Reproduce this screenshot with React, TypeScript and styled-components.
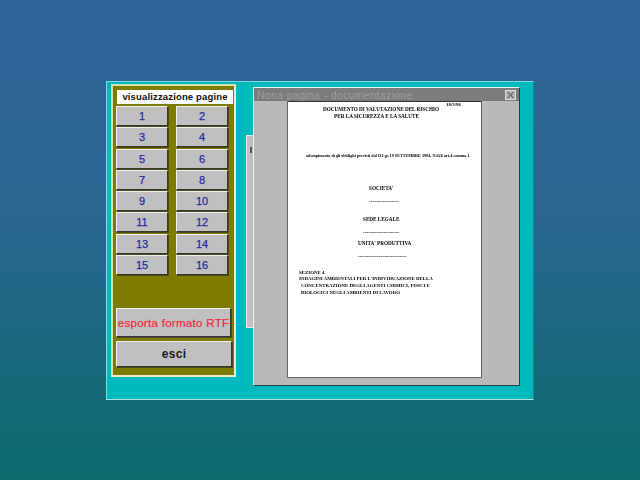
import React from "react";
import styled, { createGlobalStyle } from "styled-components";

const GlobalStyle = createGlobalStyle`
  html, body {
    margin: 0;
    padding: 0;
    width: 640px;
    height: 480px;
    overflow: hidden;
  }
  body {
    font-family: "Liberation Sans", Arial, sans-serif;
  }
`;

const Desktop = styled.div`
  position: relative;
  width: 640px;
  height: 480px;
  overflow: hidden;
  background: linear-gradient(180deg, #30639a 0%, #2a6690 45%, #0a6a6c 100%);
`;

// finestra principale
const MainWindow = styled.div`
  position: absolute;
  left: 106px;
  top: 81px;
  width: 428px;
  height: 319px;
  box-sizing: border-box;
  background: #00b9bd;
  border-top: 1px solid #7fdcdc;
  border-left: 1px solid #7fdcdc;
  border-right: 1px solid #0a8c90;
  border-bottom: 1px solid #b5e4e4;
`;

const SidePanel = styled.div`
  position: absolute;
  left: 4px;
  top: 2px;
  width: 125px;
  height: 293px;
  box-sizing: border-box;
  background: #7f7d00;
  border: 2px solid;
  border-color: #d8e0b0 #ecebc4 #ecebc4 #d8e0b0;
  padding: 4px 0 0 3px;
  display: flex;
  flex-direction: column;
`;

const PanelTitle = styled.div`
  height: 14px;
  width: 116px;
  margin-left: 1px;
  background: #fff;
  color: #111;
  font-size: 9.5px;
  font-weight: bold;
  line-height: 14px;
  text-align: center;
  letter-spacing: 0.15px;
  white-space: nowrap;
`;

const PageGrid = styled.div`
  margin-top: 2px;
  display: grid;
  grid-template-columns: 52px 52px;
  column-gap: 8px;
  grid-auto-rows: 20px;
  row-gap: 1.3px;
`;

const Raised = styled.button`
  box-sizing: border-box;
  margin: 0;
  padding: 0;
  background: #c0c0c0;
  border: 1px solid;
  border-color: #f0f0f0 #38382a #38382a #f0f0f0;
  box-shadow: 1px 1px 0 #4a4a20;
  font-family: "Liberation Sans", Arial, sans-serif;
  font-weight: bold;
  text-align: center;
`;

const PageButton = styled(Raised)`
  color: #2a2aa0;
  font-size: 11px;
  font-weight: normal;
  -webkit-text-stroke: 0.25px #2a2aa0;
`;

const ActionButton = styled(Raised)<{ $tone: string }>`
  display: block;
  width: 115px;
  height: 29px;
  color: ${(p) => p.$tone};
  font-size: 12px;
  white-space: nowrap;
`;

const ExportButton = styled(ActionButton)`
  margin-top: 33px;
  font-weight: normal;
  font-size: 11.5px;
  -webkit-text-stroke: 0.2px #f02838;
  letter-spacing: 0.3px;
`;

const ExitButton = styled(ActionButton)`
  margin-top: 4px;
  height: 26px;
  width: 116px;
  font-size: 12px;
  letter-spacing: 0.3px;
`;

// finestra nascosta dietro
const BackWindow = styled.div`
  position: absolute;
  left: 139px;
  top: 53px;
  width: 20px;
  height: 193px;
  box-sizing: border-box;
  background: #c0c0c0;
  border: 1px solid #e8e8e8;
  border-right: none;
`;

const BackMark = styled.div`
  position: absolute;
  left: 3px;
  top: 11px;
  width: 2px;
  height: 6px;
  background: #555;
`;

const DocWindow = styled.div`
  position: absolute;
  left: 146px;
  top: 5px;
  width: 267px;
  height: 299px;
  box-sizing: border-box;
  background: #b9b9b9;
  border: 1px solid;
  border-color: #e6f2f2 #2c3c3c #2c3c3c #e6f2f2;
  display: flex;
  flex-direction: column;
`;

const TitleBar = styled.div`
  height: 13px;
  flex: none;
  background: #7c7c7c;
  display: flex;
  align-items: center;
  justify-content: space-between;
  padding: 0 3px 0 3px;
`;

const TitleText = styled.span`
  color: #9c9c9c;
  font-size: 10.5px;
  letter-spacing: 0.35px;
  white-space: nowrap;
`;

const CloseBox = styled.span`
  width: 11px;
  height: 10px;
  display: flex;
  background: #b4b4b4;
  border: 1px solid #d8d8d8;
  box-sizing: border-box;
`;

const DocBody = styled.div`
  flex: 1;
  display: flex;
  padding-left: 33px;
`;

const Sheet = styled.div`
  position: relative;
  width: 195px;
  height: 277px;
  box-sizing: border-box;
  background: #fff;
  border: 1px solid #666;
  border-top-color: #333;
  font-family: "Liberation Serif", "Times New Roman", serif;
  color: #000;
  font-size: 4.9px;
  font-weight: bold;
`;

const SheetText = styled.div`
  position: absolute;
  inset: 0;
  filter: blur(0.35px);
`;

// righe del documento: la posizione sul foglio fa parte del contenuto
const DocLine = styled.div<{ $x: number; $y: number; $size?: number }>`
  position: absolute;
  left: ${(p) => p.$x}px;
  top: ${(p) => p.$y}px;
  font-size: ${(p) => p.$size ?? 4.9}px;
  line-height: 6px;
  white-space: nowrap;
`;

const lines: { x: number; y: number; text: string; size?: number }[] = [
  { x: 158, y: 0, text: "18/3/96" },
  { x: 35, y: 4, text: "DOCUMENTO DI VALUTAZIONE DEL RISCHIO", size: 5.2 },
  { x: 46, y: 11, text: "PER LA SICUREZZA E LA SALUTE", size: 5.2 },
  { x: 18, y: 51, text: "adempimento degli obblighi previsti dal D.Lgs 19 SETTEMBRE 1994, N.626 art.4 comma 1", size: 4.2 },
  { x: 81, y: 83, text: "SOCIETA'", size: 5.2 },
  { x: 81, y: 96, text: "-----------------", size: 5.2 },
  { x: 75, y: 114, text: "SEDE LEGALE", size: 5.2 },
  { x: 75, y: 127, text: "---------------------", size: 5.2 },
  { x: 70, y: 138, text: "UNITA' PRODUTTIVA", size: 5.2 },
  { x: 70, y: 151, text: "----------------------------", size: 5.2 },
  { x: 11, y: 168, text: "SEZIONE 4" },
  { x: 11, y: 174, text: "INDAGINI AMBIENTALI PER L'INDIVIDUAZIONE DELLA" },
  { x: 13, y: 181, text: "CONCENTRAZIONE DEGLI AGENTI CHIMICI, FISICI E" },
  { x: 13, y: 188, text: "BIOLOGICI NEGLI AMBIENTI DI LAVORO" },
];

const pages = Array.from({ length: 16 }, (_, i) => i + 1);

const App: React.FC = () => {
  return (
    <Desktop>
      <GlobalStyle />
      <MainWindow>
        <SidePanel>
          <PanelTitle>visualizzazione pagine</PanelTitle>
          <PageGrid>
            {pages.map((n) => (
              <PageButton key={n}>{n}</PageButton>
            ))}
          </PageGrid>
          <ExportButton $tone="#f02838">esporta formato RTF</ExportButton>
          <ExitButton $tone="#1a1a1a">esci</ExitButton>
        </SidePanel>
        <BackWindow>
          <BackMark />
        </BackWindow>
        <DocWindow>
          <TitleBar>
            <TitleText>Nona pagina - documentazione</TitleText>
            <CloseBox>
              <svg width="9" height="8" viewBox="0 0 9 8">
                <path d="M1.5 1 L7.5 7 M7.5 1 L1.5 7" stroke="#6a6a6a" strokeWidth="1.2" />
              </svg>
            </CloseBox>
          </TitleBar>
          <DocBody>
            <Sheet>
              <SheetText>
                {lines.map((l) => (
                  <DocLine key={l.y} $x={l.x} $y={l.y} $size={l.size}>
                    {l.text}
                  </DocLine>
                ))}
              </SheetText>
            </Sheet>
          </DocBody>
        </DocWindow>
      </MainWindow>
    </Desktop>
  );
};

export default App;
